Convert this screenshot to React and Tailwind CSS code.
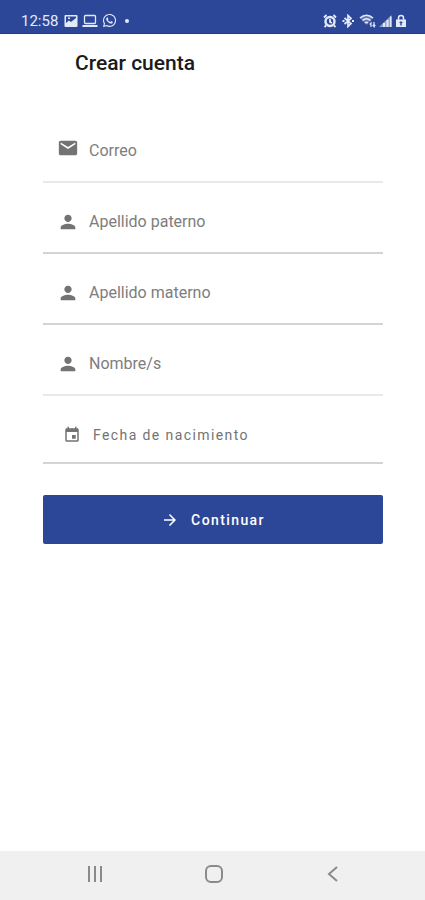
import React, { useState } from 'react'
import { MdArrowForward, MdEmail, MdEvent, MdPerson } from 'react-icons/md'
import { FaWhatsapp } from 'react-icons/fa'

const FIELDS = [
  { id: 'correo', label: 'Correo', type: 'email', Icon: MdEmail, raised: true, soft: true },
  { id: 'paterno', label: 'Apellido paterno', type: 'text', Icon: MdPerson },
  { id: 'materno', label: 'Apellido materno', type: 'text', Icon: MdPerson },
  { id: 'nombre', label: 'Nombre/s', type: 'text', Icon: MdPerson, soft: true },
]

function StatusBar() {
  return (
    <div className="flex h-[34px] items-center justify-between border-b border-[#1f3c8c] bg-[#2d4798] pl-[21px] pr-[18px] pt-2 text-[#e3ebfa]">
      <div className="flex items-center gap-1">
        <span className="mr-[2px] text-[15px] leading-5">12:58</span>
        {/* Gallery */}
        <svg className="h-[14px] w-[14px]" viewBox="0 0 14 14" aria-hidden="true">
          <path fill="currentColor" fillRule="evenodd" d="M1.5 1h11a1 1 0 0 1 1 1v10a1 1 0 0 1-1 1h-11a1 1 0 0 1-1-1V2a1 1 0 0 1 1-1zM2 2.5V9l3-2.5 2 1.5 5-4V2.500zM4 3.500h2v1.500H4z" />
        </svg>
        {/* Laptop */}
        <svg className="h-[14px] w-4" viewBox="0 0 16 14" fill="none" stroke="currentColor" aria-hidden="true">
          <rect x="2.500" y="1.500" width="11" height="8" rx="1" strokeWidth="1.300" />
          <path d="M.5 12h15" strokeWidth="2" />
        </svg>
        <FaWhatsapp className="h-[15px] w-[15px]" aria-hidden="true" />
        <span className="ml-1 h-1 w-1 rounded-full bg-[#e3ebfa]" />
      </div>

      <div className="flex items-center gap-[3px]">
        {/* Alarm */}
        <svg className="h-[14px] w-[14px]" viewBox="0 0 14 14" fill="none" stroke="currentColor" aria-hidden="true">
          <circle cx="7" cy="7.500" r="4.500" strokeWidth="2.400" />
          <path d="M7 5v3l2 1M1 3.500 3.500 1M13 3.500 10.500 1M3 11.500l-1.500 1.500M11 11.500l1.500 1.500" strokeWidth="1.800" />
        </svg>
        {/* Bluetooth */}
        <svg className="h-[14px] w-4" viewBox="0 0 16 14" fill="none" stroke="currentColor" aria-hidden="true">
          <path d="M4.500 4 11 9.500 8 12.500v-11l3 3L4.500 10" strokeWidth="1.700" />
          <path d="M2.500 7h2M12 7h2" strokeWidth="2" />
        </svg>
        {/* Wifi with traffic arrows */}
        <svg className="h-[14px] w-[17px]" viewBox="0 0 17 14" fill="none" stroke="currentColor" aria-hidden="true">
          <path d="M1 4c4-3.500 9-3.500 13 0L7.500 11z" fill="currentColor" fillOpacity=".3" stroke="none" />
          <path d="M1 4c4-3.500 9-3.500 13 0M3.500 6.500c2.500-2.200 5.500-2.200 8 0M6 9c1-.8 2-.8 3 0" strokeWidth="1.600" />
          <path d="M12 13V9l-1.300 1.500M15 8v4.500l-1.300-1.500M15 12.500l1.300-1.500" strokeWidth="1.200" />
        </svg>
        {/* Signal */}
        <svg className="h-[14px] w-[13px]" viewBox="0 0 13 14" fill="currentColor" aria-hidden="true">
          <path d="M0 13 12.500 1v12z" opacity=".55" />
          <path d="M4 9h2v4H4zM7.500 6h2v7h-2zM11 2.500h1.500V13H11z" />
        </svg>
        {/* Lock */}
        <svg className="h-[14px] w-3" viewBox="0 0 12 14" aria-hidden="true">
          <path d="M3.500 6V4a2.500 2.500 0 0 1 5 0v2" fill="none" stroke="currentColor" strokeWidth="1.500" />
          <path fill="currentColor" fillRule="evenodd" d="M1 5.500h10V13H1zM6 7 4 9h1.300v2.500h1.400V9H8z" />
        </svg>
      </div>
    </div>
  )
}

function Field({ id, label, type, Icon, raised, soft }) {
  const [value, setValue] = useState('')

  return (
    <div className={`flex h-[71px] items-center border-b-2 pl-[14px] pt-2 ${soft ? 'border-[#e9e9e9]' : 'border-[#d4d4d4]'}`}>
      <label htmlFor={id} className={raised ? 'pb-[5px]' : ''}>
        <Icon className="h-[22px] w-[22px] text-[#737373]" aria-hidden="true" />
      </label>
      <input
        id={id}
        type={type}
        value={value}
        onChange={(e) => setValue(e.target.value)}
        placeholder={label}
        aria-label={label}
        className="ml-[10px] h-8 min-w-0 flex-1 bg-transparent text-base text-[#333] outline-none placeholder:text-[#7d7d7d]"
      />
    </div>
  )
}

function NavBar() {
  return (
    <nav className="flex h-[49px] items-center justify-around bg-[#f0f0f0] pb-[3px] pl-[35px] pr-8 text-[#8a8a8a]">
      <button type="button" aria-label="Recientes" className="flex h-6 w-6 items-center justify-center">
        <svg className="h-5 w-5" viewBox="0 0 20 20" fill="none" stroke="currentColor" strokeWidth="2">
          <path d="M4 2v16M10 2v16M16 2v16" />
        </svg>
      </button>
      <button type="button" aria-label="Inicio" className="flex h-6 w-6 items-center justify-center">
        <svg className="h-5 w-5" viewBox="0 0 20 20" fill="none" stroke="currentColor" strokeWidth="2">
          <rect x="2" y="2" width="16" height="16" rx="5" />
        </svg>
      </button>
      <button type="button" aria-label="Atrás" className="flex h-6 w-6 items-center justify-center">
        <svg className="h-5 w-5" viewBox="0 0 20 20" fill="none" stroke="currentColor" strokeWidth="2">
          <path d="M14 3 6 10l8 7" />
        </svg>
      </button>
    </nav>
  )
}

export default function App() {
  return (
    <div className="flex min-h-screen flex-col bg-white font-['Roboto',sans-serif]">
      <StatusBar />

      <header className="flex h-[60px] items-center pl-[75px]">
        <h1 className="text-[21px] font-medium text-[#1a1a1a]">Crear cuenta</h1>
      </header>

      <main className="flex-1 pl-[43px] pr-[42px] pt-[18px]">
        <form onSubmit={(e) => e.preventDefault()}>
          {FIELDS.map((field) => (
            <Field key={field.id} {...field} />
          ))}

          <button
            type="button"
            className="flex h-[68px] w-full items-center border-b-2 border-[#d4d4d4] pl-5 pt-3 text-sm tracking-widest text-[#737373]"
          >
            <MdEvent className="mr-3 h-[18px] w-[18px]" aria-hidden="true" />
            Fecha de nacimiento
          </button>

          <button
            type="submit"
            className="mt-[31px] flex h-[49px] w-full items-center justify-center rounded-xs bg-[#2d4798] text-sm font-medium tracking-widest text-white"
          >
            <MdArrowForward className="mr-3 h-[18px] w-[18px]" aria-hidden="true" />
            Continuar
          </button>
        </form>
      </main>

      <NavBar />
    </div>
  )
}
